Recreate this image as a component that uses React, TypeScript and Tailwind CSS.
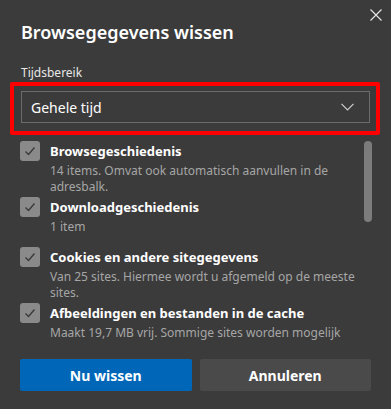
import type { ReactNode } from "react";

const items = [
  {
    title: "Browsegeschiedenis",
    desc: "14 items. Omvat ook automatisch aanvullen in de adresbalk.",
  },
  { title: "Downloadgeschiedenis", desc: "1 item" },
  {
    title: "Cookies en andere sitegegevens",
    desc: "Van 25 sites. Hiermee wordt u afgemeld op de meeste sites.",
  },
  {
    title: "Afbeeldingen en bestanden in de cache",
    desc: "Maakt 19,7 MB vrij. Sommige sites worden mogelijk",
  },
];

function Checkbox() {
  return (
    <span className="flex h-[20px] w-[20px] shrink-0 items-center justify-center rounded-[3px] bg-[#8a8a8a]">
      <svg width="12" height="12" viewBox="0 0 12 12" fill="none">
        <path d="M1.5 6.5 L4.5 9.5 L10.5 2.5" stroke="#3a3a3a" strokeWidth="1.4" />
      </svg>
    </span>
  );
}

function Item({ title, desc }: { title: string; desc: ReactNode }) {
  return (
    <div className="flex min-h-[48px] gap-[10px]">
      <Checkbox />
      <div className="pr-[8px]">
        <div className="text-[13px] font-bold leading-[20px] text-white">{title}</div>
        <div className="mt-[2px] text-[12px] leading-[16px] text-[#a6a6a6]">{desc}</div>
      </div>
    </div>
  );
}

export default function App() {
  return (
    <div
      className="relative h-[409px] w-[391px] overflow-hidden bg-[#3b3b3b]"
      style={{ fontFamily: '"Segoe UI", "Noto Sans", sans-serif' }}
    >
      <button className="absolute right-[9px] top-[9px] h-[12px] w-[12px]">
        <svg width="12" height="12" viewBox="0 0 12 12" fill="none">
          <path d="M0.5 0.5 L11.5 11.5 M11.5 0.5 L0.5 11.5" stroke="#e8e8e8" strokeWidth="1.1" />
        </svg>
      </button>

      <div className="px-[21px] pt-[20px]">
        <h1 className="text-[18px] font-semibold leading-[24px] text-white">
          Browsegegevens wissen
        </h1>
        <div className="mt-[21px] text-[12px] leading-[16px] text-[#e8e8e8]">Tijdsbereik</div>
        <div className="relative mt-[10px]">
          <div className="flex h-[32px] items-center justify-between border border-[#6b6b6b] pl-[9px] pr-[15px]">
            <span className="text-[14px] text-white">Gehele tijd</span>
            <svg width="13" height="8" viewBox="0 0 13 8" fill="none">
              <path d="M0.5 0.8 L6.5 6.8 L12.5 0.8" stroke="#cfcfcf" strokeWidth="1.2" />
            </svg>
          </div>
          <div className="pointer-events-none absolute -bottom-[12px] -left-[11px] -right-[10px] -top-[9px] rounded-[2px] border-[4px] border-[#ff0000]" />
        </div>
      </div>

      <div className="relative mt-[18px] h-[202px] overflow-hidden px-[20px]">
        <div className="flex flex-col gap-[2px]">
          {items.map((it) => (
            <Item key={it.title} title={it.title} desc={it.desc} />
          ))}
        </div>
        <div className="absolute right-[19px] top-[0px] h-[81px] w-[8px] rounded-full bg-[#7c7c7c]" />
      </div>

      <div className="mt-[16px] flex gap-[8px] px-[20px]">
        <button className="h-[32px] flex-1 rounded-[2px] bg-[#0067b8] text-[14px] font-bold text-white">
          Nu wissen
        </button>
        <button className="h-[32px] flex-1 rounded-[2px] bg-[#4a4a4a] text-[14px] font-bold text-white">
          Annuleren
        </button>
      </div>
    </div>
  );
}
